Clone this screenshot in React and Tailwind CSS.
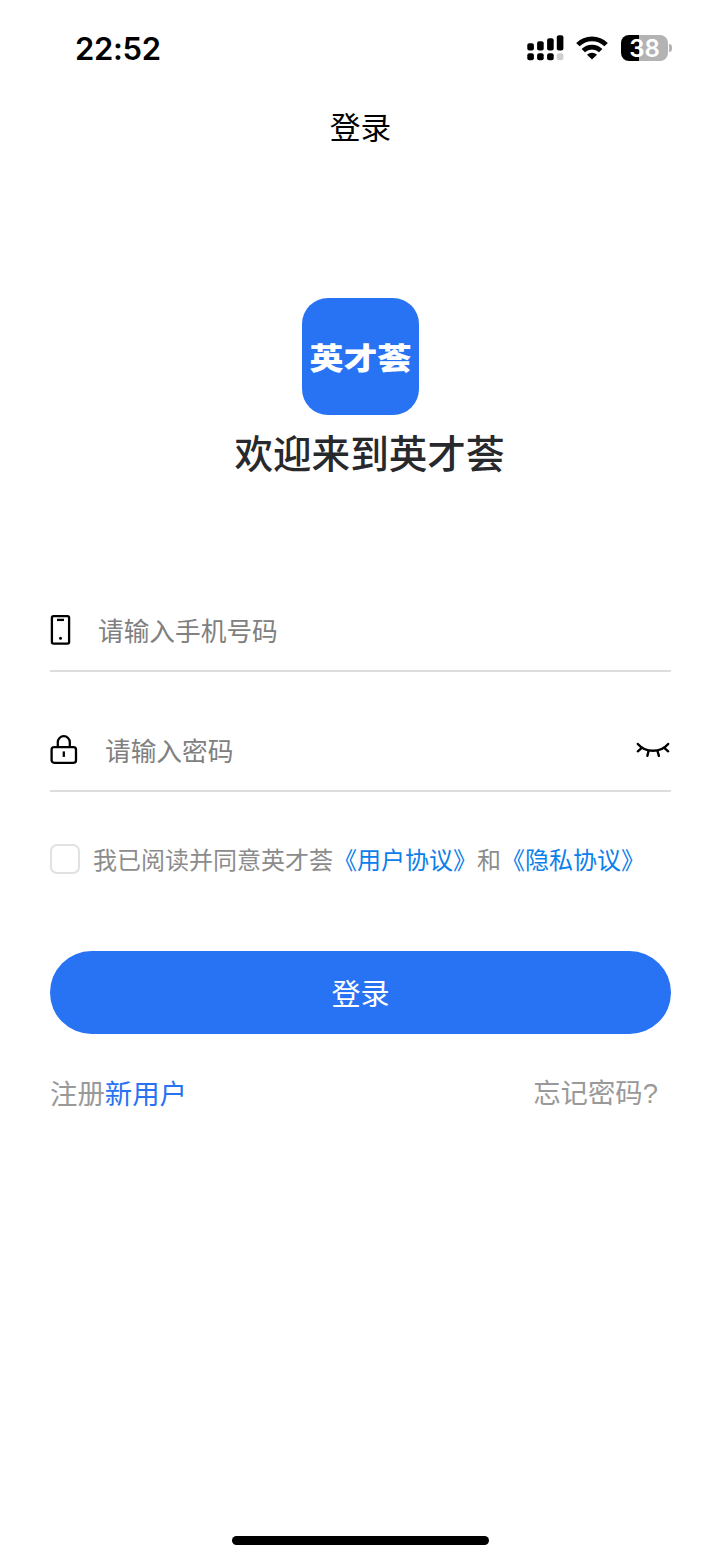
import { useState } from 'react';

function SignalIcon() {
  return (
    <svg width="37" height="26" viewBox="0 0 37 26">
      <rect x="0.3" y="8.3" width="6.6" height="7.2" rx="2" />
      <rect x="10.1" y="6.3" width="6.6" height="9.2" rx="2" />
      <rect x="20.1" y="3.3" width="6.6" height="12.2" rx="2" />
      <rect x="29.8" y="0.3" width="6.6" height="15.2" rx="2" />
      <rect x="0.3" y="18.3" width="6.6" height="7" rx="2" />
      <rect x="10.1" y="18.3" width="6.6" height="7" rx="2" />
      <rect x="20.1" y="18.3" width="6.6" height="7" rx="2" />
      <rect x="29.8" y="18.3" width="6.6" height="7" rx="2" fill="#cfcfcf" />
    </svg>
  );
}

function WifiIcon() {
  return (
    <svg width="32" height="24" viewBox="0 0 32 24" fill="none" stroke="#000" strokeWidth="4.8">
      <path d="M1.9 8.6a20 20 0 0 1 28.2 0" />
      <path d="M7.3 14.6a12.4 12.4 0 0 1 17.4 0" />
      <path d="M16 23.6l-5-4.9a7.2 7.2 0 0 1 10 0z" fill="#000" stroke="none" />
    </svg>
  );
}

function PhoneIcon() {
  return (
    <svg width="21" height="30" viewBox="0 0 21 30" fill="none" stroke="#000" strokeWidth="2.3">
      <rect x="1.9" y="1.2" width="17.2" height="27.4" rx="1.6" />
      <path d="M7 4.9h7" />
      <circle cx="10.5" cy="23.3" r="1.5" fill="#000" stroke="none" />
    </svg>
  );
}

function LockIcon() {
  return (
    <svg width="28" height="30" viewBox="0 0 28 30" fill="none" stroke="#000" strokeWidth="2.3">
      <rect x="1.6" y="12.2" width="24.4" height="15.6" rx="2.6" />
      <path d="M7.8 12V7.2a6 6 0 0 1 12 0V12" />
      <path d="M13.8 16.4v5.5" />
    </svg>
  );
}

function ClosedEyeIcon() {
  return (
    <svg width="34" height="16" viewBox="0 0 34 16" fill="none" stroke="#000" strokeWidth="2.4" strokeLinecap="round">
      <path d="M1.8 2C9.5 11 24.5 11 32.2 2" />
      <path d="M5.8 5.8L1.8 9.3M28.2 5.8l4 3.5M12.5 9l-1.1 4.8M21.5 9l1.4 4.8" />
    </svg>
  );
}

export default function App() {
  const [phone, setPhone] = useState('');
  const [password, setPassword] = useState('');
  const [agreed, setAgreed] = useState(false);

  return (
    <div className="flex h-[1560px] w-[721px] flex-col bg-white font-['Noto_Sans_CJK_SC',sans-serif]">
      {/* Status bar */}
      <div className="flex h-24 items-center pl-[75px] pr-[49px]">
        <span className="font-[Inter,sans-serif] text-[31px] font-semibold leading-none tracking-[-0.3px] text-black">
          22:52
        </span>
        <div className="ml-auto flex items-center">
          <SignalIcon />
          <div className="ml-3">
            <WifiIcon />
          </div>
          <div className="ml-[13px] flex h-[26px] w-[47px] items-center justify-center rounded-lg bg-[linear-gradient(to_right,#000_38%,#b3b3b3_38%)] pt-px font-[Inter,sans-serif] text-[24px] font-semibold leading-none text-white">
            38
          </div>
          <div className="ml-px h-2 w-[3px] rounded-r-full bg-[#b3b3b3]" />
        </div>
      </div>

      <h1 className="flex h-[62px] items-center justify-center pb-px text-[30.7px] leading-none text-black">登录</h1>

      {/* Logo */}
      <div className="mt-[140px] flex flex-col items-center">
        <div className="flex h-[117px] w-[117px] items-center justify-center rounded-[26px] bg-[#2873f4]">
          <span className="scale-y-[0.87] text-[34px] font-black leading-none text-white">英才荟</span>
        </div>
        <h2 className="mb-[2px] ml-[18px] mt-4 text-[38.6px] font-medium leading-10 text-[#28292d]">
          欢迎来到英才荟
        </h2>
      </div>

      <form className="mt-[116px] flex flex-col px-[50px]" onSubmit={(e) => e.preventDefault()}>
        <div className="flex h-[83px] items-center border-b-2 border-[#dddddd]">
          <PhoneIcon />
          <input
            type="tel"
            value={phone}
            onChange={(e) => setPhone(e.target.value)}
            placeholder="请输入手机号码"
            className="ml-[27px] h-10 flex-1 text-[25.7px] outline-none placeholder:text-[#808080]"
          />
        </div>
        <div className="mt-[37px] flex h-[83px] items-center border-b-2 border-[#dddddd]">
          <LockIcon />
          <input
            type="password"
            value={password}
            onChange={(e) => setPassword(e.target.value)}
            placeholder="请输入密码"
            className="ml-[27px] h-10 flex-1 text-[25.7px] outline-none placeholder:text-[#808080]"
          />
          <div className="mr-px">
            <ClosedEyeIcon />
          </div>
        </div>

        {/* Agreement */}
        <div className="mt-[52px] flex h-[30px] items-center whitespace-nowrap text-[24px] leading-none text-[#8c8c8c]">
          <input
            type="checkbox"
            checked={agreed}
            onChange={(e) => setAgreed(e.target.checked)}
            className="mr-[13px] size-[30px] shrink-0 appearance-none rounded-[7px] border-2 border-[#e1e1e4] checked:bg-[#2873f4]"
          />
          <span>我已阅读并同意英才荟</span>
          <span className="text-[#0c80ea]">《用户协议》</span>
          <span>和</span>
          <span className="text-[#0c80ea]">《隐私协议》</span>
        </div>

        <button type="submit" className="mt-[77px] h-[83px] rounded-full bg-[#2873f4] pt-px text-[29px] text-white">
          登录
        </button>

        <div className="mt-[39px] flex h-10 items-center justify-between pr-[13px] text-[27.4px] leading-none text-[#999]">
          <span>
            注册<span className="text-[#2873f4]">新用户</span>
          </span>
          <span>
            忘记密码<span className="font-['Liberation_Sans',sans-serif]">?</span>
          </span>
        </div>
      </form>

      {/* Home indicator */}
      <div className="mx-auto mb-[15px] mt-auto h-[9px] w-[257px] rounded-full bg-black" />
    </div>
  );
}
